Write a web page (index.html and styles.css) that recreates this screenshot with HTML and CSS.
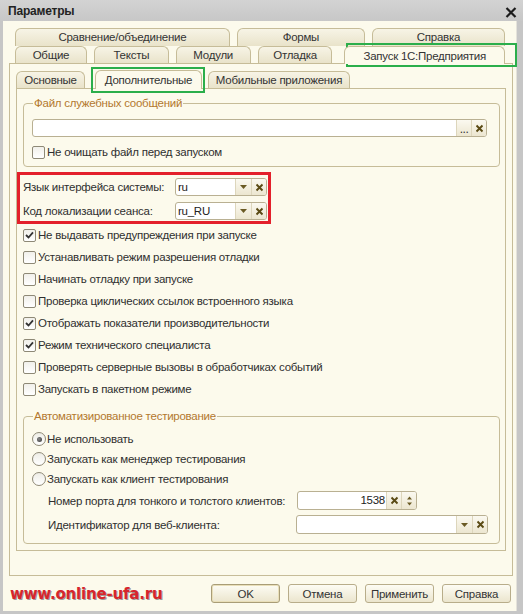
FILE: index.html
```html
<!DOCTYPE html>
<html lang="ru">
<head>
<meta charset="utf-8">
<title>Параметры</title>
<link rel="stylesheet" href="styles.css">
</head>
<body>
<div class="titlebar">
  <span class="title">Параметры</span>
  <svg class="close" width="12" height="11" viewBox="0 0 12 11"><path d="M1.5 1 L10.5 10 M10.5 1 L1.5 10" stroke="#1c1c1c" stroke-width="2.2" fill="none"/></svg>
</div>
<div class="client">
  <div class="tabrow row1">
    <div class="tab w218">Сравнение/объединение</div>
    <div class="tab w130">Формы</div>
    <div class="tab w135">Справка</div>
  </div>
  <div class="tabrow row2">
    <div class="tab w73">Общие</div>
    <div class="tab w76">Тексты</div>
    <div class="tab w76">Модули</div>
    <div class="tab w76">Отладка</div>
    <div class="tab active w163">Запуск 1С:Предприятия</div>
  </div>
  <div class="panel outer">
    <div class="tabrow inner-tabs">
      <div class="tab w69">Основные</div>
      <div class="tab active w107 ml10">Дополнительные</div>
      <div class="tab w142 ml6">Мобильные приложения</div>
    </div>
    <div class="panel inner">
      <fieldset class="group g1">
        <legend>Файл служебных сообщений</legend>
        <div class="input w455">
          <span class="val"></span>
          <span class="btn dots">...</span>
          <span class="btn"><svg width="9" height="9" viewBox="0 0 9 9"><path d="M1.5 1.5 L7.5 7.5 M7.5 1.5 L1.5 7.5" stroke="#5a4a14" stroke-width="1.9"/></svg></span>
        </div>
        <label class="check row16"><span class="box"></span>Не очищать файл перед запуском</label>
      </fieldset>

      <div class="locale">
        <div class="frow"><span class="flabel">Язык интерфейса системы:</span>
          <div class="input w91"><span class="val">ru</span>
            <span class="btn dd"><svg width="7" height="4" viewBox="0 0 7 4"><polygon points="0,0 7,0 3.5,4" fill="#6a5a24"/></svg></span>
            <span class="btn"><svg width="9" height="9" viewBox="0 0 9 9"><path d="M1.5 1.5 L7.5 7.5 M7.5 1.5 L1.5 7.5" stroke="#5a4a14" stroke-width="1.9"/></svg></span>
          </div>
        </div>
        <div class="frow"><span class="flabel">Код локализации сеанса:</span>
          <div class="input w91"><span class="val">ru_RU</span>
            <span class="btn dd"><svg width="7" height="4" viewBox="0 0 7 4"><polygon points="0,0 7,0 3.5,4" fill="#6a5a24"/></svg></span>
            <span class="btn"><svg width="9" height="9" viewBox="0 0 9 9"><path d="M1.5 1.5 L7.5 7.5 M7.5 1.5 L1.5 7.5" stroke="#5a4a14" stroke-width="1.9"/></svg></span>
          </div>
        </div>
      </div>

      <div class="checks">
        <label class="check"><span class="box on"><svg width="9" height="8" viewBox="0 0 9 8"><path d="M1 4 L3.5 6.5 L8 1.3" stroke="#333" stroke-width="1.8" fill="none"/></svg></span>Не выдавать предупреждения при запуске</label>
        <label class="check"><span class="box"></span>Устанавливать режим разрешения отладки</label>
        <label class="check"><span class="box"></span>Начинать отладку при запуске</label>
        <label class="check"><span class="box"></span>Проверка циклических ссылок встроенного языка</label>
        <label class="check"><span class="box on"><svg width="9" height="8" viewBox="0 0 9 8"><path d="M1 4 L3.5 6.5 L8 1.3" stroke="#333" stroke-width="1.8" fill="none"/></svg></span>Отображать показатели производительности</label>
        <label class="check"><span class="box on"><svg width="9" height="8" viewBox="0 0 9 8"><path d="M1 4 L3.5 6.5 L8 1.3" stroke="#333" stroke-width="1.8" fill="none"/></svg></span>Режим технического специалиста</label>
        <label class="check"><span class="box"></span>Проверять серверные вызовы в обработчиках событий</label>
        <label class="check"><span class="box"></span>Запускать в пакетном режиме</label>
      </div>

      <fieldset class="group g2">
        <legend>Автоматизированное тестирование</legend>
        <label class="radio"><span class="circle sel"></span>Не использовать</label>
        <label class="radio"><span class="circle"></span>Запускать как менеджер тестирования</label>
        <label class="radio"><span class="circle"></span>Запускать как клиент тестирования</label>
        <div class="prow first"><span class="plabel">Номер порта для тонкого и толстого клиентов:</span>
          <div class="input w119"><span class="val num">1538</span>
            <span class="btn"><svg width="9" height="9" viewBox="0 0 9 9"><path d="M1.5 1.5 L7.5 7.5 M7.5 1.5 L1.5 7.5" stroke="#5a4a14" stroke-width="1.9"/></svg></span>
            <span class="btn spin"><svg width="7" height="12" viewBox="0 0 7 12"><polygon points="3.5,1.5 6,4.5 1,4.5" fill="#6a5a24"/><polygon points="1,7.5 6,7.5 3.5,10.5" fill="#6a5a24"/></svg></span>
          </div>
        </div>
        <div class="prow second"><span class="plabel">Идентификатор для веб-клиента:</span>
          <div class="input w191"><span class="val"></span>
            <span class="btn dd"><svg width="7" height="4" viewBox="0 0 7 4"><polygon points="0,0 7,0 3.5,4" fill="#6a5a24"/></svg></span>
            <span class="btn"><svg width="9" height="9" viewBox="0 0 9 9"><path d="M1.5 1.5 L7.5 7.5 M7.5 1.5 L1.5 7.5" stroke="#5a4a14" stroke-width="1.9"/></svg></span>
          </div>
        </div>
      </fieldset>
    </div>
  </div>
  <div class="footer">
    <span class="watermark">www.online-ufa.ru</span>
    <div class="buttons">
      <span class="button default">OK</span>
      <span class="button">Отмена</span>
      <span class="button">Применить</span>
      <span class="button">Справка</span>
    </div>
  </div>
</div>
<div class="hl green hl-outer"></div>
<div class="hl green hl-inner"></div>
<div class="hl red hl-locale"></div>
</body>
</html>
```
FILE: styles.css
```css
* { box-sizing: border-box; }
html, body { margin: 0; padding: 0; }
body {
  width: 523px; height: 614px; overflow: hidden; position: relative;
  background: #c6c6c6;
  font-family: "Liberation Sans", Arial, sans-serif;
  font-size: 11.5px; letter-spacing: -0.25px; color: #2f2f2f;
}
.titlebar {
  height: 21px; display: flex; align-items: center; justify-content: space-between;
  padding: 1px 6px 0 8px;
  background: linear-gradient(#d3d3d3, #c7c7c7);
}
.title { font-weight: bold; font-size: 12px; color: #222; letter-spacing: -0.2px; }
.close { margin-top: 2px; }
.client {
  margin-left: 3px; width: 514px; height: 590px;
  background: #fcfaec; padding: 7px 4px 0 6px;
  border-right: 1px solid #e4e2da;
}
.tabrow { display: flex; align-items: flex-end; padding-left: 6px; }
.tab {
  height: 18px; display: flex; align-items: center; justify-content: center;
  border: 1px solid #c6bc98; border-bottom: none; border-radius: 6px 6px 0 0;
  background: linear-gradient(#f7f4e6, #e9e3ca);
  margin-right: 7px; color: #333; white-space: nowrap;
}
.row1 .tab { padding-bottom: 1px; }
.row2 { height: 17px; }
.row2 .tab { height: 17px; }
.row2 .tab.active { height: 18px; margin-bottom: -1px; margin-left: 5px; }
.tab.active { background: #fcfaec; position: relative; z-index: 1; }
.w218 { width: 218px; } .w130 { width: 130px; } .w135 { width: 135px; }
.w73 { width: 73px; } .w76 { width: 76px; } .w163 { width: 163px; }
.w69 { width: 69px; } .w107 { width: 107px; } .w142 { width: 142px; }
.ml10 { margin-left: 3px; } .ml6 { margin-left: -1px; }

.panel { border: 1px solid #c6bc98; background: #fcfaec; }
.outer { width: 504px; height: 513px; padding: 6px 6px 0 6px; }
.inner-tabs { padding-left: 0; height: 18px; }
.inner-tabs .tab { height: 17px; }
.inner-tabs .tab.active { height: 19px; margin-bottom: -1px; }
.inner { width: 490px; height: 463px; padding: 0 6px; }

.group {
  margin: 0; width: 477px; border: 1px solid #c6bc98; border-radius: 4px;
  min-inline-size: 0;
}
.group legend {
  padding: 0 1px; margin-left: 1px; line-height: 14px; height: 14px;
  color: #b3782e;
}
.g1 { margin-top: 7px; padding: 9px 11px 6px 8px; }
.g2 { margin-top: 9px; padding: 6px 11px 9px 8px; }

.input {
  height: 18px; display: flex; background: #fff;
  border: 1px solid #b9b092; border-radius: 3px; overflow: hidden;
}
.input .val { flex: 1; padding-left: 2px; line-height: 16px; color: #222; }
.input .val.num { text-align: right; padding-right: 1px; }
.btn {
  width: 15px; display: flex; align-items: center; justify-content: center;
  border-left: 1px solid #ddd6bc;
  background: linear-gradient(#fbf9f0, #ece6d0);
}
.btn.dots { font-size: 12px; color: #333; align-items: flex-end; padding-bottom: 3px; letter-spacing: -0.5px; line-height: 8px; }
.btn.dd { width: 16px; }
.w455 { width: 455px; }
.w91 { width: 92px; }
.w119 { width: 120px; }
.w191 { width: 192px; }
.prow .input { height: 19px; }

.check, .radio { display: flex; align-items: center; white-space: nowrap; }
.check { height: 22px; }
.check.row16 { height: 16px; margin-top: 7px; }
.box {
  width: 13px; height: 13px; border: 1px solid #8e8976; border-radius: 2px;
  background: linear-gradient(#f1f0ea, #fff); margin-right: 2px;
  display: flex; align-items: center; justify-content: center; flex: none;
}
.locale { margin-top: 11px; }
.frow { display: flex; align-items: center; height: 18px; }
.frow + .frow { margin-top: 6px; }
.flabel { width: 152px; white-space: nowrap; }
.checks { margin-top: 4px; }

.radio { height: 20px; }
.circle {
  width: 14px; height: 14px; border: 1px solid #8e8976; border-radius: 50%;
  background: linear-gradient(#eeede6, #fff); margin-right: 1px; flex: none;
  display: flex; align-items: center; justify-content: center;
}
.circle.sel::after {
  content: ""; width: 5px; height: 5px; border-radius: 50%;
  background: radial-gradient(circle at 40% 40%, #888, #333);
}
.prow { display: flex; align-items: center; height: 19px; padding-left: 16px; }
.prow.first { margin-top: 2px; }
.prow.second { margin-top: 5px; }
.plabel { width: 249px; white-space: nowrap; }

.footer { display: flex; align-items: center; margin-top: 8px; height: 19px; }
.watermark {
  margin-left: 1px; font-family: "DejaVu Sans", Verdana, sans-serif;
  font-weight: bold; font-size: 15px; color: #d6262c; letter-spacing: -0.2px;
  text-shadow: 1px 1px 0 #a09a9a;
}
.buttons { margin-left: auto; margin-right: 1px; display: flex; gap: 8px; }
.button {
  width: 69px; height: 19px; display: flex; align-items: center; justify-content: center;
  border: 1px solid #b8ad8a; border-radius: 3px;
  background: linear-gradient(#fdfcf4, #ebe5cd); color: #333;
}
.button.default { border-color: #a99d77; box-shadow: inset 0 0 0 1px #e9dfb9; }

.hl { position: absolute; pointer-events: none; }
.green { border: 2px solid #2bae4b; }
.red { border: 3px solid #e3202b; }
.hl-outer { left: 346px; top: 43px; width: 171px; height: 24px; }
.hl-inner { left: 91px; top: 67px; width: 114px; height: 26px; }
.hl-locale { left: 17px; top: 172px; width: 254px; height: 52px; }
```
